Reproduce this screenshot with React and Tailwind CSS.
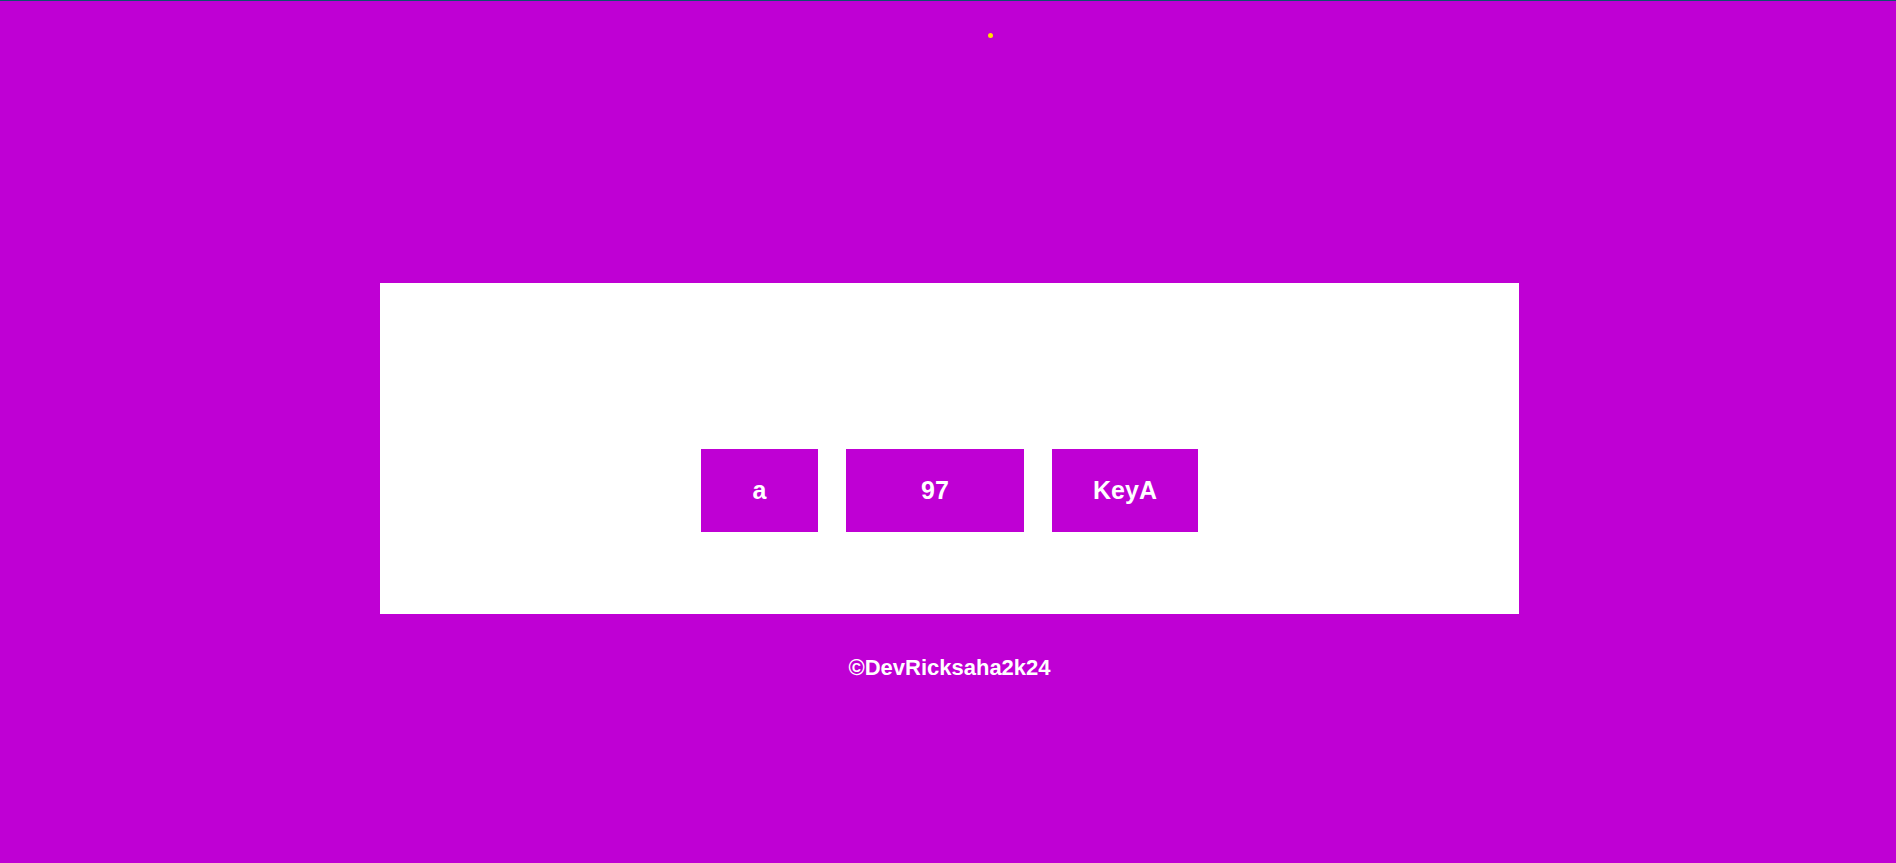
export default function App() {
  return (
    <div className="flex min-h-screen flex-col items-center border-t border-[#10506e] bg-[#bf00d4] pl-[3px] font-['Liberation_Sans',Arial,sans-serif] font-bold text-white">
      <header className="flex h-[282px] w-full justify-center pt-8 pl-[82px]">
        <svg className="size-[5px]" viewBox="0 0 5 5" aria-hidden="true">
          <circle cx="2.5" cy="2.5" r="2.5" fill="#ffde00" />
        </svg>
      </header>
      <main className="flex w-[60.2%] justify-center bg-white pt-[166px] pb-[82px]">
        <div className="flex gap-7 text-[25px] leading-7">
          <div className="flex h-[83px] w-[117px] items-center justify-center bg-[#bf00d4] pb-0.5">a</div>
          <div className="flex h-[83px] w-[178px] items-center justify-center bg-[#bf00d4] pb-0.5">97</div>
          <div className="flex h-[83px] w-[146px] items-center justify-center bg-[#bf00d4] pb-0.5">KeyA</div>
        </div>
      </main>
      <footer className="pt-[41px] text-[22px] leading-[26px]">©DevRicksaha2k24</footer>
    </div>
  );
}
